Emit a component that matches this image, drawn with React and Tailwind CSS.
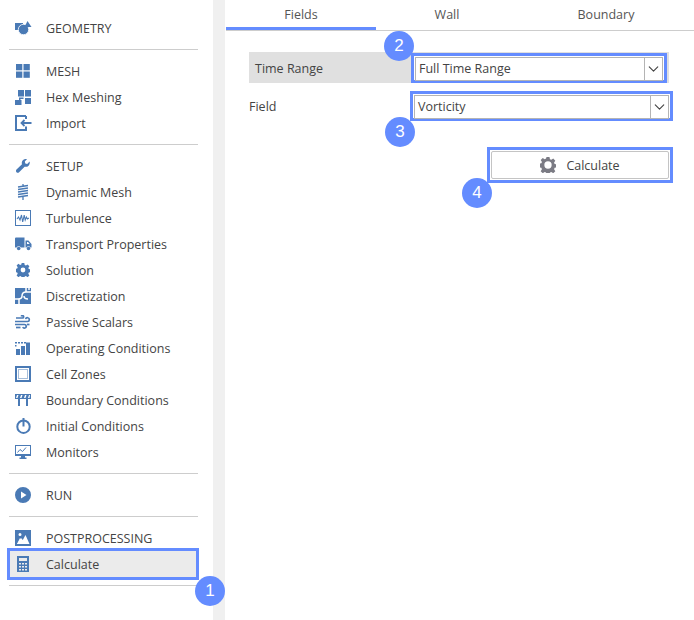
import { ChevronDown } from 'lucide-react';

const blue = '#4a7ab5';

// Sidebar icons, drawn to the size they have in the screenshot
const IconGeometry = () => (
  <svg width="17" height="14" viewBox="0 0 17 14" fill={blue}>
    <path d="M0 2h8v7H0z" />
    <circle cx="8.5" cy="8.5" r="5.2" stroke="white" strokeWidth="0.8" />
    <path d="M12.5 0L16.5 6h-7z" />
  </svg>
);
const IconMesh = () => (
  <svg width="14" height="14" viewBox="0 0 14 14" fill={blue}>
    <rect width="6.3" height="6.3" />
    <rect x="7.5" width="6.3" height="6.3" />
    <rect y="7.5" width="6.3" height="6.3" />
    <rect x="7.5" y="7.5" width="6.3" height="6.3" />
  </svg>
);
const IconHex = () => (
  <svg width="16" height="15" viewBox="0 0 16 15" fill={blue}>
    <rect x="3" width="6" height="6.5" />
    <rect x="10" width="6" height="6.5" />
    <rect x="10" y="8" width="6" height="6" />
    <path d="M4 7.500h4.500V9H5.500v1H4zM0 10h6.500v5H0z" />
  </svg>
);
const IconImport = () => (
  <svg width="17" height="16" viewBox="0 0 17 16" fill="none" stroke={blue} strokeWidth="2">
    <path d="M11 1H1v14h10v-3.500M11 1v3" />
    <path d="M16.500 8H7M9.500 5L6.500 8l3 3" strokeWidth="1.800" />
  </svg>
);
const IconWrench = () => (
  <svg width="14" height="14" viewBox="0 0 14 14" fill={blue}>
    <path d="M13.600 2.600l-2.400 2.300-1.900-.5-.5-1.900L11.100.1C9.500-.3 7.800.1 6.800 1.200 5.800 2.300 5.500 3.800 6 5.200L.5 10.600c-.7.7-.7 1.900 0 2.600.7.7 1.900.7 2.600 0l5.500-5.500c1.400.4 2.900.1 4-1 1-1 1.400-2.600 1-4.100z" />
  </svg>
);
const IconDynamic = () => (
  <svg width="12" height="16" viewBox="0 0 12 16" fill="none" stroke={blue} strokeWidth="1.300">
    <path d="M6 0v1.500M1 3l10-1.500M1 5.500l10-1.500M1 8l10-1.500M1 10.500l10-1.500M1 13l10-1.500M6 13v3" />
  </svg>
);
const IconTurbulence = () => (
  <svg width="16" height="16" viewBox="0 0 16 16" fill="none" stroke={blue}>
    <rect x="0.500" y="0.500" width="15" height="15" />
    <path d="M2 9l1.500-2 1.500 3 1.500-5 1.200 7 1.500-7 1 5 1.200-3 1 2 1.500-1" strokeWidth="1.100" />
  </svg>
);
const IconTruck = () => (
  <svg width="17" height="14" viewBox="0 0 17 14" fill={blue}>
    <path d="M0 1.500a1 1 0 0 1 1-1h8.500v10H5.800a2.300 2.300 0 0 0-4.200 0H0z" />
    <path d="M10.500 3.500h3l3 3.500v3.500h-1a2.300 2.300 0 0 0-4 0h-1zM12 5v2h2.700l-1.700-2z" fillRule="evenodd" />
    <circle cx="3.700" cy="11.500" r="1.800" />
    <circle cx="13.500" cy="11.500" r="1.800" />
  </svg>
);
const IconGear = ({ size = 14, color = blue, hole = 'M7 4.600a2.400 2.400 0 1 0 0 4.800 2.400 2.400 0 0 0 0-4.800z' }) => (
  <svg width={size} height={size} viewBox="0 0 14 14" fill={color}>
    <path
      fillRule="evenodd"
      d={`M5.700 0h2.600l.4 2 1.200.5 1.700-1.100 1.800 1.800-1.100 1.700.5 1.200 2 .4v2.600l-2 .4-.5 1.200 1.100 1.700-1.800 1.800-1.700-1.100-1.200.5-.4 2H5.700l-.4-2-1.200-.5-1.700 1.100-1.800-1.800 1.100-1.700-.5-1.200-2-.4V5.900l2-.4.500-1.200-1.100-1.700 1.800-1.800 1.700 1.100 1.200-.5z${hole}`}
    />
  </svg>
);
const IconDiscretization = () => (
  <svg width="16" height="16" viewBox="0 0 16 16" fill="none">
    <rect width="16" height="16" fill={blue} />
    <g stroke="white" strokeWidth="1.500">
      <path d="M16 4h-5C8 4 7 6 7 8s-2 3-4 3H0" />
      <path d="M9 8c0 2 2 3 4 3M4 11v5" />
      <path d="M11 0v4M14 0v2" />
    </g>
  </svg>
);
const IconWind = () => (
  <svg width="16" height="14" viewBox="0 0 16 14" fill="none" stroke={blue} strokeWidth="1.700">
    <path d="M0 6.500h12.500a1.900 1.900 0 1 0-1.900-2.400" />
    <path d="M1 3h6.500a1.200 1.200 0 1 0-1.200-1.500" />
    <path d="M0 9.500h9.500a1.800 1.800 0 1 1-1.700 2.500" />
    <path d="M12 9.500h2.500" />
    <path d="M1 12.500h4.500" />
  </svg>
);
const IconOperating = () => (
  <svg width="16" height="14" viewBox="0 0 16 14" fill={blue}>
    <rect x="1" y="8" width="4" height="6" />
    <rect x="6" y="5" width="4" height="9" />
    <rect x="11" y="1.500" width="4" height="12.500" />
    <path d="M0 1h2v1.500H0zM3 1h2v1.500H3zM6 1h2v1.500H6zM9 1h2v1.500H9zM0 4h1.500v1.500H0z" />
  </svg>
);
const IconZones = () => (
  <svg width="16" height="16" viewBox="0 0 16 16" fill="none">
    <rect x="1" y="1" width="14" height="14" stroke={blue} strokeWidth="2" />
    <rect x="3.500" y="3.500" width="9" height="9" stroke={blue} strokeDasharray="1 1" />
  </svg>
);
const IconBarrier = () => (
  <svg width="16" height="12" viewBox="0 0 16 12" fill={blue}>
    <path fillRule="evenodd" d="M0 0h16v5H0zM2 1l-1 3h1.500l1-3zM6 1L5 4h1.500l1-3zM10 1L9 4h1.500l1-3zM14 1l-1 3h1.500l.5-3z" />
    <rect x="3" y="5" width="2" height="7" />
    <rect x="11" y="5" width="2" height="7" />
  </svg>
);
const IconTimer = () => (
  <svg width="15" height="16" viewBox="0 0 15 16" fill="none" stroke={blue}>
    <circle cx="7.500" cy="8.700" r="6.200" strokeWidth="2" />
    <path d="M7.500 0v8.500" strokeWidth="2" />
  </svg>
);
const IconMonitor = () => (
  <svg width="16" height="14" viewBox="0 0 16 14" fill={blue}>
    <path fillRule="evenodd" d="M0 0h16v11H0zM1 1v8h14V1z" />
    <path d="M2.500 7.500l2.500-3 2.500 2 3.500-4" fill="none" stroke={blue} />
    <path d="M6 11h4v1.500h1.500v1.500h-7v-1.500H6z" />
  </svg>
);
const IconRun = () => (
  <svg width="16" height="16" viewBox="0 0 16 16" fill={blue}>
    <path fillRule="evenodd" d="M8 0a8 8 0 1 1 0 16A8 8 0 0 1 8 0zM6 4.500v7l5.500-3.500z" />
  </svg>
);
const IconPost = () => (
  <svg width="16" height="16" viewBox="0 0 16 16" fill={blue}>
    <path
      fillRule="evenodd"
      d="M0 0h16v16H0zM5 3a1.500 1.500 0 1 0 0 3 1.500 1.500 0 0 0 0-3zM10.500 5L7.800 10 6 8l-4 6h12.500z"
    />
    <path d="M5 8L2 14h6z" fill="white" />
  </svg>
);
const IconCalc = () => (
  <svg width="12" height="16" viewBox="0 0 12 16" fill={blue}>
    <path
      fillRule="evenodd"
      d="M0 0h12v16H0zM2 2v3h8V2zM2 7v1.500h2V7zM5 7v1.500h2V7zM8 7v1.500h2V7zM2 10v1.500h2V10zM5 10v1.500h2V10zM8 10v1.500h2V10zM2 13v1.500h2V13zM5 13v1.500h2V13zM8 13v1.500h2V13z"
    />
  </svg>
);

const groups = [
  [{ label: 'GEOMETRY', icon: <IconGeometry /> }],
  [
    { label: 'MESH', icon: <IconMesh /> },
    { label: 'Hex Meshing', icon: <IconHex /> },
    { label: 'Import', icon: <IconImport /> },
  ],
  [
    { label: 'SETUP', icon: <IconWrench /> },
    { label: 'Dynamic Mesh', icon: <IconDynamic /> },
    { label: 'Turbulence', icon: <IconTurbulence /> },
    { label: 'Transport Properties', icon: <IconTruck /> },
    { label: 'Solution', icon: <IconGear /> },
    { label: 'Discretization', icon: <IconDiscretization /> },
    { label: 'Passive Scalars', icon: <IconWind /> },
    { label: 'Operating Conditions', icon: <IconOperating /> },
    { label: 'Cell Zones', icon: <IconZones /> },
    { label: 'Boundary Conditions', icon: <IconBarrier /> },
    { label: 'Initial Conditions', icon: <IconTimer /> },
    { label: 'Monitors', icon: <IconMonitor /> },
  ],
  [{ label: 'RUN', icon: <IconRun /> }],
  [
    { label: 'POSTPROCESSING', icon: <IconPost /> },
    { label: 'Calculate', icon: <IconCalc />, active: true },
  ],
];

const Badge = ({ n, className }) => (
  <div
    className={`absolute w-[30px] h-[30px] rounded-full bg-[#648cff] text-white flex items-center justify-center text-[17px] font-['Liberation_Sans',sans-serif] ${className}`}
  >
    {n}
  </div>
);

const MenuRow = ({ item }) => {
  if (item.active) {
    return (
      <div className="flex items-center h-[32px] -mt-[3px] -mb-[3px] ml-[7px] mr-[14px] border-[3px] border-[#648cff] bg-[#ebebeb]">
        <div className="flex justify-center items-center w-[26px] shrink-0">{item.icon}</div>
        <span className="ml-[10px] pt-[2px]">{item.label}</span>
      </div>
    );
  }
  return (
    <div className="flex items-center h-[26px] ml-[7px] mr-[14px]">
      <div className="flex justify-center items-center w-[32px] shrink-0">{item.icon}</div>
      <span className="ml-[7px] pt-[2px]">{item.label}</span>
    </div>
  );
};

const SelectBox = ({ value }) => (
  <div className="flex items-center h-[24px] border border-[#b4b4b4] bg-white flex-1">
    <span className="flex-1 pl-[3px] pt-px">{value}</span>
    <div className="flex items-center justify-center w-[18px] h-full border-l border-[#b4b4b4]">
      <ChevronDown size={18} strokeWidth={1.6} className="text-[#444]" />
    </div>
  </div>
);

export default function App() {
  return (
    <div className="relative flex w-[694px] h-[620px] bg-white text-[12.5px] text-[#444] font-['Open_Sans','Noto_Sans',sans-serif] overflow-hidden">
      {/* Sidebar */}
      <div className="relative w-[213px] shrink-0 pt-[15px]">
        {groups.map((group, i) => (
          <div key={i} className="pb-[9px] mb-[8px] relative">
            {group.map((item) => (
              <MenuRow key={item.label} item={item} />
            ))}
            <div className="absolute bottom-0 left-[9px] w-[189px] h-px bg-[#cdcdcd]" />
          </div>
        ))}
        <Badge n="1" className="left-[195px] top-[576px]" />
      </div>
      <div className="w-[12px] shrink-0 bg-[#f0f0f0]" />

      {/* Main panel */}
      <div className="relative flex-1 pl-px">
        <div className="flex h-[31px] border-b border-[#cdcdcd] text-[#555]">
          <div className="w-[150px] text-center pt-[6px] border-b-[3px] border-[#648cff] h-[30px]">Fields</div>
          <div className="w-[142px] text-center pt-[6px]">Wall</div>
          <div className="flex-1 text-center pt-[6px]">Boundary</div>
        </div>

        <div className="pt-[21px] pl-[23px]">
          <div className="flex items-center w-[420px] h-[31px] bg-[#e0e0e0] pl-[6px]">
            <span className="w-[156px] pt-[3px]">Time Range</span>
            <div className="flex w-[256px] h-[30px] border-[3px] border-[#648cff] p-px bg-white">
              <SelectBox value="Full Time Range" />
            </div>
          </div>

          <div className="flex items-center w-[424px] h-[30px] mt-[8px]">
            <span className="w-[161px] pt-[3px]">Field</span>
            <div className="flex w-[263px] h-[30px] border-[3px] border-[#648cff] p-px bg-white">
              <SelectBox value="Vorticity" />
            </div>
          </div>

          <div className="flex justify-end w-[424px] mt-[26px]">
            <div className="w-[186px] h-[36px] border-[3px] border-[#648cff] p-px">
              <div className="flex items-center justify-center gap-[10px] h-full border border-[#c4c4c4] rounded-[2px]">
                <IconGear size={16} color="#7b7b84" hole="M7 3.800a3.200 3.200 0 1 0 0 6.400 3.200 3.200 0 0 0 0-6.400z" />
                <span className="pt-[3px]">Calculate</span>
              </div>
            </div>
          </div>
        </div>

        <Badge n="2" className="left-[159px] top-[31px]" />
        <Badge n="3" className="left-[160px] top-[117px]" />
        <Badge n="4" className="left-[237px] top-[178px]" />
      </div>
    </div>
  );
}
